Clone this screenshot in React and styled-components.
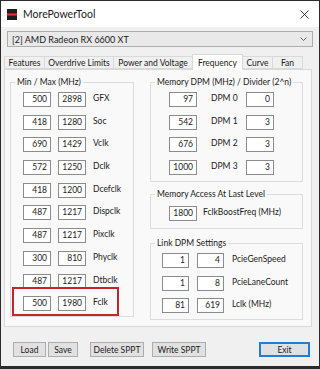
import styled, { createGlobalStyle } from 'styled-components';

const GlobalStyle = createGlobalStyle`
  html, body {
    margin: 0;
    padding: 0;
    background: #f0f0f0;
  }
  * {
    box-sizing: border-box;
  }
`;

const Window = styled.div`
  width: 320px;
  height: 369px;
  display: flex;
  flex-direction: column;
  background: #f0f0f0;
  border: 1px solid #2b2b2b;
  border-bottom-width: 3px;
  font-family: Lato, 'Noto Sans', sans-serif;
  font-size: 8.5px;
  color: #1a1a1a;
  white-space: nowrap;
  overflow: hidden;
`;

const TitleBar = styled.div`
  height: 26px;
  flex: none;
  display: flex;
  align-items: center;
  background: #fff;
  padding: 0 10px 0 6px;
  gap: 6px;

  .title {
    font-size: 10.5px;
    flex: 1;
  }
`;

const Body = styled.div`
  flex: 1;
  display: flex;
  flex-direction: column;
  padding: 4px 6px 0 3px;
`;

const Combo = styled.div`
  height: 16px;
  margin-left: 3px;
  display: flex;
  align-items: center;
  justify-content: space-between;
  padding: 0 5px 0 4px;
  background: #e9e9e9;
  border: 1px solid #adadad;
  font-size: 9px;
`;

const TabStrip = styled.div`
  height: 15px;
  margin-top: 7px;
  display: flex;
  align-items: flex-end;
  position: relative;
  z-index: 1;
`;

const Tab = styled.div`
  width: ${(p) => p.$w}px;
  height: ${(p) => (p.$active ? '16px' : '13px')};
  margin-bottom: ${(p) => (p.$active ? '-1px' : '0')};
  display: flex;
  align-items: center;
  justify-content: center;
  background: ${(p) => (p.$active ? '#fff' : '#f0f0f0')};
  border: 1px solid #d9d9d9;
  border-bottom: ${(p) => (p.$active ? 'none' : '1px solid #d9d9d9')};
  margin-left: -1px;

  &:first-child {
    margin-left: 0;
  }
`;

const TabPage = styled.div`
  height: 258px;
  margin-right: 1px;
  background: #f9f9f9;
  border: 1px solid #d9d9d9;
  display: grid;
  grid-template-columns: 124px 153px;
  column-gap: 16px;
  align-items: start;
  padding: 6px 0 0 5px;
`;

const Group = styled.fieldset`
  margin: ${(p) => p.$mt || 0}px 0 0 0;
  padding: 0;
  border: 1px solid #dcdcdc;
  min-width: 0;

  legend {
    margin-left: 4px;
    padding: 0 2px;
    line-height: 12px;
    height: 12px;
  }
`;

const Rows = styled.div`
  display: flex;
  flex-direction: column;
  gap: ${(p) => p.$gap || 0}px;
  padding: ${(p) => p.$pad};
`;

const Row = styled.div`
  display: flex;
  align-items: center;
  height: 15px;
  gap: ${(p) => p.$gap || 7}px;
`;

const Field = styled.div`
  width: ${(p) => p.$w || 28}px;
  height: 15px;
  flex: none;
  background: #fff;
  border: 1px solid #8c8c8c;
  text-align: right;
  padding-right: 3px;
  line-height: 13px;
`;

const Label = styled.span`
  width: ${(p) => (p.$w ? `${p.$w}px` : 'auto')};
  flex: none;
  margin-top: -3px;
`;

const Highlight = styled.div`
  width: 107px;
  margin: -9px 0 -5px -11px;
  padding: 7px 0 3px 9px;
  border: 2px solid #c8232c;
`;

const RightColumn = styled.div`
  display: flex;
  flex-direction: column;
`;

const Footer = styled.div`
  margin: 15px 3px 0 9px;
  display: flex;
  gap: 2px;
`;

const Button = styled.div`
  height: 15px;
  width: ${(p) => p.$w}px;
  margin-left: ${(p) => (p.$auto ? 'auto' : `${p.$ml || 0}px`)};
  display: flex;
  align-items: center;
  justify-content: center;
  background: #e1e1e1;
  border: ${(p) => (p.$default ? '2px solid #1f7fd6' : '1px solid #adadad')};
`;

const AppIcon = () => (
  <svg width="10" height="11" viewBox="0 0 10 11">
    <rect width="10" height="11" fill="#1c1c1c" />
    <rect y="4" width="10" height="3" fill="#b0141c" />
    <rect y="5" width="10" height="1" fill="#e2323a" />
  </svg>
);

const CloseIcon = () => (
  <svg width="9" height="9" viewBox="0 0 9 9">
    <path d="M0.5 0.5 L8.5 8.5 M8.5 0.5 L0.5 8.5" stroke="#222" strokeWidth="0.9" />
  </svg>
);

const Chevron = () => (
  <svg width="7" height="4" viewBox="0 0 7 4">
    <path d="M0.5 0.5 L3.5 3.5 L6.5 0.5" fill="none" stroke="#555" strokeWidth="0.9" />
  </svg>
);

const clocks = [
  ['500', '2898', 'GFX'],
  ['418', '1280', 'Soc'],
  ['690', '1429', 'Vclk'],
  ['572', '1250', 'Dclk'],
  ['418', '1200', 'Dcefclk'],
  ['487', '1217', 'Dispclk'],
  ['487', '1217', 'Pixclk'],
  ['300', '810', 'Phyclk'],
  ['487', '1217', 'Dtbclk'],
  ['500', '1980', 'Fclk'],
];

const dpm = [
  ['97', 'DPM 0', '0'],
  ['542', 'DPM 1', '3'],
  ['676', 'DPM 2', '3'],
  ['1000', 'DPM 3', '3'],
];

const link = [
  ['1', '4', 'PcieGenSpeed'],
  ['1', '8', 'PcieLaneCount'],
  ['81', '619', 'Lclk (MHz)'],
];

const tabs = [
  ['Features', 41],
  ['Overdrive Limits', 70],
  ['Power and Voltage', 80],
  ['Frequency', 51],
  ['Curve', 31],
  ['Fan', 31],
];

const ClockRow = ({ row }) => (
  <Row>
    <Field>{row[0]}</Field>
    <Field>{row[1]}</Field>
    <Label>{row[2]}</Label>
  </Row>
);

export default function App() {
  return (
    <Window>
      <GlobalStyle />
      <TitleBar>
        <AppIcon />
        <span className="title">MorePowerTool</span>
        <CloseIcon />
      </TitleBar>

      <Body>
        <Combo>
          <span>[2] AMD Radeon RX 6600 XT</span>
          <Chevron />
        </Combo>

        <TabStrip>
          {tabs.map(([t, w]) => (
            <Tab key={t} $w={w} $active={t === 'Frequency'}>
              {t}
            </Tab>
          ))}
        </TabStrip>

        <TabPage>
          <Group>
            <legend>Min / Max (MHz)</legend>
            <Rows $gap={7.7} $pad="4px 0 5px 12px">
              {clocks.slice(0, 9).map((r, i) => (
                <ClockRow key={i} row={r} />
              ))}
              <Highlight>
                <ClockRow row={clocks[9]} />
              </Highlight>
            </Rows>
          </Group>

          <RightColumn>
            <Group>
              <legend>Memory DPM (MHz) / Divider (2^n)</legend>
              <Rows $gap={7.7} $pad="4px 0 6px 18px">
                {dpm.map((r, i) => (
                  <Row key={i} $gap={14}>
                    <Field>{r[0]}</Field>
                    <Label $w={21}>{r[1]}</Label>
                    <Field>{r[2]}</Field>
                  </Row>
                ))}
              </Rows>
            </Group>

            <Group $mt={6}>
              <legend>Memory Access At Last Level</legend>
              <Rows $pad="6px 0 7px 18px">
                <Row $gap={6}>
                  <Field>1800</Field>
                  <Label>FclkBoostFreq (MHz)</Label>
                </Row>
              </Rows>
            </Group>

            <Group $mt={8}>
              <legend>Link DPM Settings</legend>
              <Rows $gap={7.5} $pad="4px 0 6px 11px">
                {link.map((r, i) => (
                  <Row key={i} $gap={8}>
                    <Field $w={27}>{r[0]}</Field>
                    <Field $w={27}>{r[1]}</Field>
                    <Label>{r[2]}</Label>
                  </Row>
                ))}
              </Rows>
            </Group>
          </RightColumn>
        </TabPage>

        <Footer>
          <Button $w={33}>Load</Button>
          <Button $w={30}>Save</Button>
          <Button $w={54} $ml={10}>Delete SPPT</Button>
          <Button $w={54} $ml={6}>Write SPPT</Button>
          <Button $w={51} $auto $default>Exit</Button>
        </Footer>
      </Body>
    </Window>
  );
}
